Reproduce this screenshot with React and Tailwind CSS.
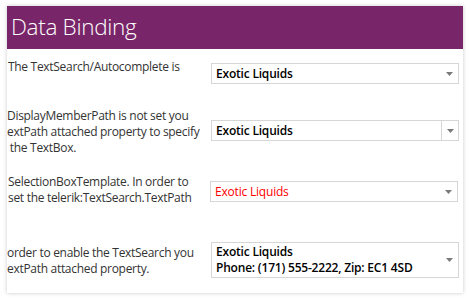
import React from "react";

function Arrow() {
  return (
    <svg width="7" height="4" viewBox="0 0 7 4" className="shrink-0">
      <path d="M0 0H7L3.5 4Z" fill="#7a7a7a" />
    </svg>
  );
}

function Dropdown({ children, divider, className = "", tall }) {
  return (
    <div
      className={`flex items-stretch border border-[#d6d6d6] bg-white w-[248px] ${tall ? "h-[36px]" : "h-[21px]"} ${className}`}
    >
      <div className="flex-1 flex flex-col justify-center pl-[4px] leading-[16px] tracking-[-0.2px]">{children}</div>
      {divider ? (
        <div className="w-[17px] border-l border-[#d6d6d6] flex items-center justify-center">
          <Arrow />
        </div>
      ) : (
        <div className="w-[17px] flex items-center justify-center">
          <Arrow />
        </div>
      )}
    </div>
  );
}

export default function App() {
  return (
    <div className="w-[470px] h-[300px] bg-white overflow-hidden" style={{ fontFamily: '"Segoe UI", "Open Sans", sans-serif' }}>
      <div className="ml-[7px] mt-[6px] w-[456px] h-[287px] bg-white shadow-[0_0_4px_rgba(0,0,0,0.22)]">
        <div className="h-[43px] bg-[#792569] flex items-center pl-[4px]">
          <span className="text-white text-[22.5px] font-light leading-none tracking-[-0.3px]">Data Binding</span>
        </div>
        <div className="text-[12px] leading-[16px] text-[#333333] tracking-[-0.3px]">
          <div className="flex items-start mt-[10px]">
            <div className="w-[204px] pl-[1px] overflow-hidden whitespace-nowrap">The TextSearch/Autocomplete is</div>
            <Dropdown className="mt-[4px]">
              <span className="text-black font-semibold">Exotic Liquids</span>
            </Dropdown>
          </div>
          <div className="flex items-start mt-[24px]">
            <div className="w-[204px] overflow-hidden whitespace-nowrap">
              <div>DisplayMemberPath is not set you</div>
              <div>extPath attached property to specify</div>
              <div>&nbsp;the TextBox.</div>
            </div>
            <Dropdown className="mt-[12px]" divider>
              <span className="text-black font-semibold">Exotic Liquids</span>
            </Dropdown>
          </div>
          <div className="flex items-start mt-[18px]">
            <div className="w-[203px] pl-[1px] overflow-hidden whitespace-nowrap">
              <div>SelectionBoxTemplate. In order to</div>
              <div>set the telerik:TextSearch.TextPath</div>
            </div>
            <Dropdown className="mt-[7px]">
              <span className="text-[#ff0000]">Exotic Liquids</span>
            </Dropdown>
          </div>
          <div className="flex items-start mt-[36px]">
            <div className="w-[204px] pt-[3px] overflow-hidden whitespace-nowrap">
              <div>order to enable the TextSearch you</div>
              <div>extPath attached property.</div>
            </div>
            <Dropdown tall>
              <span className="text-black font-semibold">Exotic Liquids</span>
              <span className="text-black font-semibold">Phone: (171) 555-2222, Zip: EC1 4SD</span>
            </Dropdown>
          </div>
        </div>
      </div>
    </div>
  );
}
